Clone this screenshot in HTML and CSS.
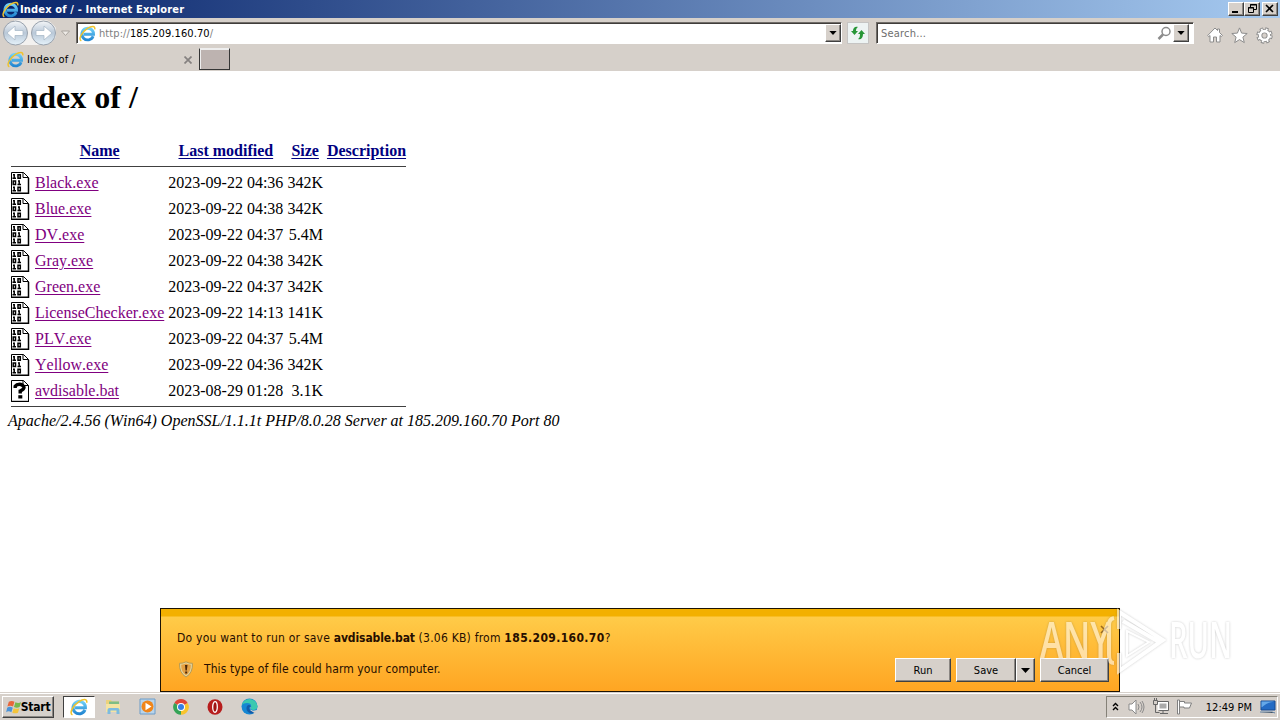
FILE: index.html
```html
<!DOCTYPE html>
<html lang="en">
<head>
    <meta charset="UTF-8">
    <meta name="viewport" content="width=device-width, initial-scale=1.0">
    <title>Index of /</title>
    <link rel="stylesheet" href="styles.css">
</head>
<body>
    <!-- shared icons -->
    <svg class="defs" width="0" height="0">
        <defs>
            <linearGradient id="ieBlue" x1="0" y1="0" x2="0" y2="1">
                <stop offset="0" stop-color="#6fd0f8"/>
                <stop offset="1" stop-color="#2387d2"/>
            </linearGradient>
            <linearGradient id="round" x1="0" y1="0" x2="0" y2="1">
                <stop offset="0" stop-color="#f4f6f8"/>
                <stop offset=".5" stop-color="#b9c8d8"/>
                <stop offset="1" stop-color="#e6f2fa"/>
            </linearGradient>
            <symbol id="ie" viewBox="0 0 16 16">
                <path d="M13.300 10.600A5.500 5.500 0 1 1 13.700 8.700H4.500" fill="none" stroke="url(#ieBlue)" stroke-width="2.700"/>
                <path d="M2.200 15C-1 13.500 2.500 6.800 8 3.200c4-2.600 7.600-2.600 6.800 1" fill="none" stroke="#f0c32c" stroke-width="1.400"/>
            </symbol>
            <symbol id="binary" viewBox="0 0 20 22">
                <path d="M.5.500h12l5 5v16H.5z" fill="#fff" stroke="#000"/>
                <path d="M17.500 6v16M0 21.300h18" stroke="#000" stroke-width="1.500"/>
                <path d="M12 .5v5h5.500" fill="none" stroke="#000"/>
                <g fill="none" stroke="#000" stroke-width="1.500">
                    <path d="M2 2.700h1.200v3.500M1.500 6.200h3.500M7 2.700h2.300v3.500H7zM2.200 8.900h2.300v3.500H2.200zM7 8.900h1.200v3.500M6.500 12.400h3.500M2 15.200h1.200v3.500M1.500 18.700h3.500M7 15.200h2.300v3.500H7z"/>
                </g>
            </symbol>
            <symbol id="unknown" viewBox="0 0 20 22">
                <path d="M.5.500h12l5 5v16H.5z" fill="#fff" stroke="#000"/>
                <path d="M17.500 6v16M0 21.300h18M12 .5v5h5.500" fill="none" stroke="#000"/>
                <path d="M4.200 8V6.200Q5.500 4.300 8.500 4.300T13 7.300Q13 9.500 9.200 11v2.500" fill="none" stroke="#000" stroke-width="3.400"/>
                <path d="M7.300 15.200h4v3.300h-4z"/>
            </symbol>
            <symbol id="down" viewBox="0 0 9 5"><path d="M0 0h9L4.500 5z"/></symbol>
        </defs>
    </svg>

    <div class="titlebar">
        <svg class="title-icon" width="17" height="17"><use href="#ie"/></svg>
        <span class="title-text">Index of / - Internet Explorer</span>
        <div class="win-buttons">
            <button type="button"><svg width="12" height="10"><path d="M2 8h6" stroke="#000" stroke-width="2"/></svg></button>
            <button type="button"><svg width="12" height="10" fill="none" stroke="#000"><path d="M4.500 3V.5h6v5H8M4 1h7M2.500 3.500h5v5h-5zM2 4h6"/></svg></button>
            <button type="button" class="close"><svg width="12" height="10"><path d="M2 1l7 7M9 1L2 8" stroke="#000" stroke-width="1.600"/></svg></button>
        </div>
    </div>

    <div class="toolbar">
        <svg class="nav" width="76" height="27" viewBox="0 0 76 27">
            <path d="M14 1h31q5 0 11 8v9q-6 8-12 8H14z" fill="#f3f1ef"/>
            <g fill="url(#round)" stroke="#99a2ad">
                <circle cx="15.500" cy="14" r="12"/>
                <circle cx="43.500" cy="14" r="12"/>
            </g>
            <g fill="#fff" stroke="#a9bac9" stroke-width=".8">
                <path d="M7 14l8-7v4.500h8v5h-8V21z"/>
                <path d="M52 14l-8-7v4.500h-8v5h8V21z"/>
            </g>
            <path d="M61.500 12h8l-4 4.500z" fill="#eeebe7" stroke="#aaa59f"/>
        </svg>
        <div class="address">
            <svg width="17" height="17"><use href="#ie"/></svg>
            <span class="url"><i>http://</i>185.209.160.70<i>/</i></span>
            <button type="button" class="drop"><svg width="8" height="4"><use href="#down"/></svg></button>
        </div>
        <button type="button" class="refresh">
            <svg width="16" height="14" viewBox="0 0 16 14" fill="#279637">
                <path d="M8 1C5 0 3 2 3 5H1l3.500 4L8 5H6c0-2 .5-3 2-4z"/>
                <path d="M8 13c3 1 5-1 5-5h2l-3.500-4L8 8h2c0 3-.5 4-2 5z"/>
            </svg>
        </button>
        <div class="search">
            <span>Search...</span>
            <svg width="15" height="15" fill="none" stroke="#8b8b8b"><circle cx="9" cy="5.500" r="4" stroke-width="1.500"/><path d="M6 8.500L1.500 13" stroke-width="2.500"/></svg>
            <button type="button" class="drop"><svg width="8" height="4"><use href="#down"/></svg></button>
        </div>
        <div class="tools">
            <svg width="16" height="16" fill="#fff" stroke="#8c8c8c"><path d="M.7 8.500L8 1l2.500 2.500V2h2v3.500l3 3-1.200 1L13 8.500v6.500H9.500v-5h-3v5H3V8.500L1.800 9.600z"/></svg>
            <svg width="17" height="17" fill="#fff" stroke="#8c8c8c"><path d="M8.500.9l2.100 5.200 5.600.4-4.300 3.600 1.400 5.500-4.800-3-4.800 3 1.400-5.500L.8 6.500l5.600-.4z"/></svg>
            <svg width="17" height="17" viewBox="-8.500 -8.500 17 17" fill="none">
                <circle r="6.500" stroke="#8c8c8c" stroke-width="3.400" stroke-dasharray="3.100 2"/>
                <circle r="4.400" stroke="#8c8c8c" stroke-width="4.400"/>
                <circle r="6.200" stroke="#fff" stroke-width="2" stroke-dasharray="1.700 3.170" stroke-dashoffset="-.6"/>
                <circle r="4.400" stroke="#fff" stroke-width="2.600"/>
            </svg>
        </div>
    </div>

    <div class="tabs">
        <div class="tab">
            <svg width="17" height="17"><use href="#ie"/></svg>
            <span>Index of /</span>
            <svg class="tab-close" width="8" height="8"><path d="M.5.5l7 7M7.500.5l-7 7" stroke="#858180" stroke-width="1.700"/></svg>
        </div>
        <div class="new-tab"></div>
    </div>

    <main class="page">
        <h1>Index of /</h1>
        <table>
            <tr><th><div class="blank"></div></th><th class="name"><a href="#">Name</a></th><th><a href="#">Last modified</a></th><th><a href="#">Size</a></th><th><a href="#">Description</a></th></tr>
            <tr><th colspan="5"><hr></th></tr>
            <tr><td><svg class="file"><use href="#binary"/></svg></td><td><a href="#">Black.exe</a></td><td>2023-09-22 04:36</td><td class="size">342K</td><td></td></tr>
            <tr><td><svg class="file"><use href="#binary"/></svg></td><td><a href="#">Blue.exe</a></td><td>2023-09-22 04:38</td><td class="size">342K</td><td></td></tr>
            <tr><td><svg class="file"><use href="#binary"/></svg></td><td><a href="#">DV.exe</a></td><td>2023-09-22 04:37</td><td class="size">5.4M</td><td></td></tr>
            <tr><td><svg class="file"><use href="#binary"/></svg></td><td><a href="#">Gray.exe</a></td><td>2023-09-22 04:38</td><td class="size">342K</td><td></td></tr>
            <tr><td><svg class="file"><use href="#binary"/></svg></td><td><a href="#">Green.exe</a></td><td>2023-09-22 04:37</td><td class="size">342K</td><td></td></tr>
            <tr><td><svg class="file"><use href="#binary"/></svg></td><td><a href="#">LicenseChecker.exe</a></td><td>2023-09-22 14:13</td><td class="size">141K</td><td></td></tr>
            <tr><td><svg class="file"><use href="#binary"/></svg></td><td><a href="#">PLV.exe</a></td><td>2023-09-22 04:37</td><td class="size">5.4M</td><td></td></tr>
            <tr><td><svg class="file"><use href="#binary"/></svg></td><td><a href="#">Yellow.exe</a></td><td>2023-09-22 04:36</td><td class="size">342K</td><td></td></tr>
            <tr><td><svg class="file"><use href="#unknown"/></svg></td><td><a href="#">avdisable.bat</a></td><td>2023-08-29 01:28</td><td class="size">3.1K</td><td></td></tr>
            <tr><th colspan="5"><hr></th></tr>
        </table>
        <address>Apache/2.4.56 (Win64) OpenSSL/1.1.1t PHP/8.0.28 Server at 185.209.160.70 Port 80</address>
    </main>

    <div class="download">
        <div class="question">
            <p>Do you want to run or save <b>avdisable.bat</b> (3.06 KB) from <b class="host">185.209.160.70</b>?</p>
            <svg width="9" height="9"><path d="M1 1l7 7M8 1L1 8" stroke="#9b6a20" stroke-width="1.600"/></svg>
        </div>
        <div class="warning">
            <svg width="16" height="17" viewBox="0 0 16 17">
                <path d="M8 .8q3 1.700 6.500 1.500Q15 12 8 16 1 12 1.500 2.300 5 2.500 8 .8z" fill="#e4d39a" stroke="#b79b55"/>
                <path d="M8 2.500q2 1 4.800 1.200Q13 11 8 14.200 3 11 3.200 3.700 6 3.500 8 2.500z" fill="#e6a142"/>
                <path d="M7 4h2.500L8.800 9.500H7.500zM7.200 10.500h2v2h-2z" fill="#4a2608"/>
            </svg>
            <p>This type of file could harm your computer.</p>
            <div class="actions">
                <button type="button" class="run">Run</button>
                <button type="button" class="save">Save</button>
                <button type="button" class="more"><svg width="9" height="5"><use href="#down"/></svg></button>
                <button type="button" class="cancel">Cancel</button>
            </div>
        </div>
    </div>

    <div class="taskbar">
        <button type="button" class="start">
            <svg width="16" height="16" viewBox="0 0 17 16">
                <path d="M3 2.500q3-2 6 0L7.500 7.500q-3-1.800-6 0z" fill="#e8663a"/>
                <path d="M10 3q3 1.600 6 0l-1.500 5q-3 1.600-6 0z" fill="#76b84b"/>
                <path d="M1.200 8.700q3-1.800 6 0L5.700 13.500q-3-1.800-5.500 0z" fill="#4b93d8"/>
                <path d="M8.200 9.200q3 1.500 6 0l-1.500 4.800q-3 1.500-6 0z" fill="#f4c43b"/>
            </svg>
            <span>Start</span>
        </button>
        <div class="apps">
            <div class="app active"><svg width="18" height="18"><use href="#ie"/></svg></div>
            <div class="app"><svg width="17" height="17" viewBox="0 0 17 17">
                <path d="M1 2h5l1 1.500h7V14H1z" fill="#ecd27c"/><path d="M4 3.500h10V6H4z" fill="#7fbd84"/><path d="M1 6h14v8H1z" fill="#f5e4a2"/>
                <path d="M2.500 16v-4q0-2 2-2h8q2 0 2 2v4h-3v-3.500h-6V16z" fill="#7dbbdf"/>
            </svg></div>
            <div class="app"><svg width="17" height="17" viewBox="0 0 17 17">
                <path d="M1 1h15v15H1z" fill="#b9d4ea" stroke="#6d9cc8"/><circle cx="8.500" cy="8.500" r="6" fill="#f08519"/><path d="M6.500 4.800l6 3.700-6 3.700z" fill="#fff"/>
            </svg></div>
            <div class="app"><svg width="16" height="16" viewBox="0 0 16 16">
                <path d="M8 8L1.300 4A7.700 7.700 0 0 1 14.700 4z" fill="#df4638"/>
                <path d="M8 8l6.700-4A7.700 7.700 0 0 1 8 15.700z" fill="#f8c42d"/>
                <path d="M8 8v7.700A7.700 7.700 0 0 1 1.300 4z" fill="#35a356"/>
                <circle cx="8" cy="8" r="4" fill="#fff"/><circle cx="8" cy="8" r="3" fill="#367fe5"/>
            </svg></div>
            <div class="app"><svg width="16" height="16"><ellipse cx="8" cy="8" rx="7.500" ry="7.700" fill="#b71d1d"/><ellipse cx="8" cy="8" rx="2.300" ry="5.300" fill="#a01212" stroke="#fff" stroke-width="1.300"/></svg></div>
            <div class="app"><svg width="17" height="17" viewBox="0 0 17 17">
                <circle cx="8.500" cy="8.500" r="8" fill="#1687d3"/>
                <path d="M.8 7A8 8 0 0 1 16.500 8q0 4-4.300 4-3.200 0-2.200-2.500Q11 5 6 5 2.500 5 .8 7z" fill="#3bc9b0"/>
                <path d="M6 8q-2 5 3.500 7.500 4 .5 6-3-6 2-7.200-1.500Q7.500 9 10 8.500 8 6 6 8z" fill="#145ba8"/>
                <path d="M10 8.500q-2 3 2 4.300l4.500-.8v2l-3 1-4-2.500z" fill="#d6d0ca"/>
            </svg></div>
        </div>
        <div class="tray">
            <svg width="7" height="9" fill="none" stroke="#000" stroke-width="1.400"><path d="M1 4l2.500-2.500L6 4M1 8l2.500-2.500L6 8"/></svg>
            <svg class="sound" width="17" height="16" fill="none" stroke="#8a8a8a"><path d="M1 5h3l4-4v14l-4-4H1z" fill="#fff"/><path d="M10 5q2 3 0 6M12 3q4 5 0 10M14 2q4 6 0 12"/></svg>
            <svg class="net" width="17" height="17" fill="none" stroke="#666"><path d="M6.500 4.500h9v7h-9z" fill="#aaa" stroke="#fff" stroke-width="2"/><path d="M5 3.500h11.500v9h-10M8 15.500h8M11 13v2M1.500 2.500v4h4v-4zM2.500 0v2M4.500 0v2M3.500 6.500v8h4"/></svg>
            <svg class="flag" width="17" height="16" fill="#fff" stroke="#808080"><path d="M1.500 1h2v14h-2zM3.500 2.500h5v1.500h7l-2 5H8V8H3.500z"/></svg>
            <span class="clock">12:49 PM</span>
            <svg class="desktop" width="16" height="14"><path d="M1 1h14v9H1z" fill="#246bc4" stroke="#174b91"/><path d="M1.500 1.500h13q-8 1-13 6z" fill="#65a8e8"/><path d="M0 12h12l3 1" stroke="#6586a9"/></svg>
        </div>
    </div>

    <svg class="watermark" width="200" height="75" viewBox="0 0 200 75">
        <text x="3" y="51" textLength="71" lengthAdjust="spacingAndGlyphs">ANY</text>
        <text x="132" y="51" textLength="63" lengthAdjust="spacingAndGlyphs">RUN</text>
        <path d="M82 22V5l44 28-44 31V46M86 14l36 21M77 11q-5 1-5 7v30q0 8 5 8"/>
        <path class="inner" d="M90 24l22 11-22 14z"/>
    </svg>
</body>
</html>
```
FILE: styles.css
```css
*{
    box-sizing: border-box;
}
body{
    margin: 0;
    width: 1280px;
    height: 720px;
    overflow: hidden;
    display: flex;
    flex-direction: column;
    background-color: #fff;
    font: 11px "DejaVu Sans Condensed", "DejaVu Sans", sans-serif;
    color: #000;
}
.defs{
    position: absolute;
}
svg{
    display: block;
    flex: none;
}
p{
    margin: 0;
}
button{
    font: inherit;
    color: #000;
    padding: 0;
    border: 1px solid;
    border-color: #fff #404040 #404040 #fff;
    box-shadow: inset -1px -1px #8b8783;
    background-color: #d6d0ca;
    display: flex;
    align-items: center;
    justify-content: center;
    white-space: nowrap;
}
/* title bar */
.titlebar{
    height: 18px;
    flex: none;
    display: flex;
    align-items: center;
    padding: 0 2px;
    background: linear-gradient(90deg, #08246b, #a6caf0);
}
.title-text{
    color: #fff;
    font-weight: bold;
    margin-left: 1px;
    letter-spacing: .16px;
}
.win-buttons{
    display: flex;
    margin-left: auto;
}
.win-buttons button{
    width: 16px;
    height: 14px;
}
.win-buttons .close{
    margin-left: 2px;
}
/* address row */
.toolbar{
    height: 30px;
    flex: none;
    display: flex;
    background-color: #d6d0ca;
    padding-top: 4px;
}
.nav{
    margin-top: -3px;
}
.address, .search{
    height: 22px;
    display: flex;
    align-items: center;
    background-color: #fff;
    border: 1px solid;
    border-color: #706c68 #fff #fff #706c68;
    box-shadow: inset 1px 1px #403d3a;
}
.address{
    width: 766px;
    padding-left: 2px;
}
.url{
    margin: 1px 0 0 3px;
    letter-spacing: .08px;
}
.url i{
    font-style: normal;
    color: #808080;
}
.drop{
    width: 16px;
    height: 18px;
    margin-left: auto;
}
.refresh{
    width: 22px;
    height: 22px;
    margin: 0 7px 0 5px;
    background-color: #edf3f3;
    border-color: #c5c4c3;
    box-shadow: none;
}
.search{
    width: 318px;
    padding: 0 4px;
    color: #6e6e6e;
}
.search span{
    margin-top: 1px;
    letter-spacing: .2px;
}
.search > svg{
    margin-left: auto;
}
.search .drop{
    margin-left: 1px;
}
.tools{
    display: flex;
    gap: 8px;
    margin: 5px 0 0 13px;
}
/* tabs */
.tabs{
    height: 23px;
    flex: none;
    display: flex;
    background-color: #d6d0ca;
}
.tab{
    width: 199px;
    display: flex;
    align-items: center;
    padding-left: 7px;
}
.tab span{
    margin: 0 0 0 3px;
    letter-spacing: .2px;
}
.tab-close{
    margin: 0 7px 0 auto;
}
.new-tab{
    width: 31px;
    height: 22px;
    background-color: #bdb3b0;
    border: 1px solid;
    border-color: #eee #353535 #353535 #353535;
    box-shadow: inset 1px 1px #eee;
}
/* directory listing */
.page{
    height: 621px;
    flex: none;
    padding: 8px;
    font: 16px "Liberation Serif", serif;
    font-kerning: none;
}
.page h1{
    margin: 0 0 21px;
    font-size: 32px;
    line-height: 37px;
}
.page table{
    line-height: 18px;
}
.page a{
    color: #800080;
    text-underline-offset: 2px;
}
.page th a{
    color: #000080;
}
.page td, .page th{
    white-space: nowrap;
}
.page .name{
    width: 131px;
}
.blank, .file{
    width: 20px;
    height: 22px;
}
.size{
    text-align: right;
}
.page hr{
    margin: 0;
    height: 2px;
    border: 0;
    border-top: 1px solid #404040;
}
address{
    margin-top: 1px;
    line-height: 18px;
}
/* download bar */
.download{
    position: absolute;
    left: 160px;
    top: 608px;
    width: 960px;
    height: 84px;
    border: 1px solid #1d1304;
    background: linear-gradient(#f3b000 0 7px, #ffcb48 8px, #ffa522);
    font-size: 12px;
    color: #260e00;
}
.question{
    height: 42px;
    display: flex;
    padding: 22px 10px 0 16px;
    line-height: 15px;
}
.question p{
    letter-spacing: .23px;
}
.question b{
    letter-spacing: -.1px;
}
.question .host{
    letter-spacing: .38px;
}
.question svg{
    margin: -6px 0 0 auto;
}
.warning{
    display: flex;
    align-items: center;
    padding: 5px 10px 0 17px;
}
.warning p{
    margin-left: 10px;
    letter-spacing: .08px;
}
.actions{
    display: flex;
    margin-left: auto;
    font-size: 11px;
}
.actions button{
    height: 24px;
    margin-top: 2px;
}
.actions .run{
    width: 56px;
    margin-right: 5px;
}
.actions .save{
    width: 60px;
}
.actions .more{
    width: 19px;
    margin-right: 5px;
}
.actions .cancel{
    width: 69px;
}
/* taskbar */
.taskbar{
    height: 28px;
    flex: none;
    display: flex;
    align-items: center;
    background-color: #d6d0ca;
    border-top: 1px solid #d6d0ca;
    box-shadow: inset 0 1px #fff;
    padding: 2px 2px 2px;
}
.start{
    width: 52px;
    height: 22px;
    font-weight: bold;
    font-size: 12px;
}
.start span{
    margin-left: -1px;
    letter-spacing: -.2px;
}
.apps{
    display: flex;
    margin-left: 9px;
    gap: 2px;
}
.app{
    width: 32px;
    height: 22px;
    display: flex;
    align-items: center;
    justify-content: center;
}
.app.active{
    background-color: #fff;
    border: 1px solid;
    border-color: #404040 #fff #fff #404040;
}
.tray{
    display: flex;
    align-items: center;
    margin-left: auto;
    width: 172px;
    height: 22px;
    padding: 0 1px 0 5px;
    border: 1px solid;
    border-color: #858178 #fff #fff #858178;
}
.sound{
    margin-left: 9px;
}
.net{
    margin-left: 7px;
}
.flag{
    margin-left: 7px;
}
.clock{
    margin: 1px 0 0 auto;
}
.desktop{
    margin-left: 8px;
}
/* logo over the corner */
.watermark{
    position: absolute;
    left: 1037px;
    top: 607px;
    overflow: visible;
    font: 600 50px "Open Sans", sans-serif;
    fill: #fff;
    opacity: .55;
    filter: drop-shadow(0 0 1px rgba(70, 70, 70, .5));
}
.watermark path{
    fill: none;
    stroke: #fff;
    stroke-width: 4;
}
.watermark .inner{
    stroke-width: 2;
}
```
